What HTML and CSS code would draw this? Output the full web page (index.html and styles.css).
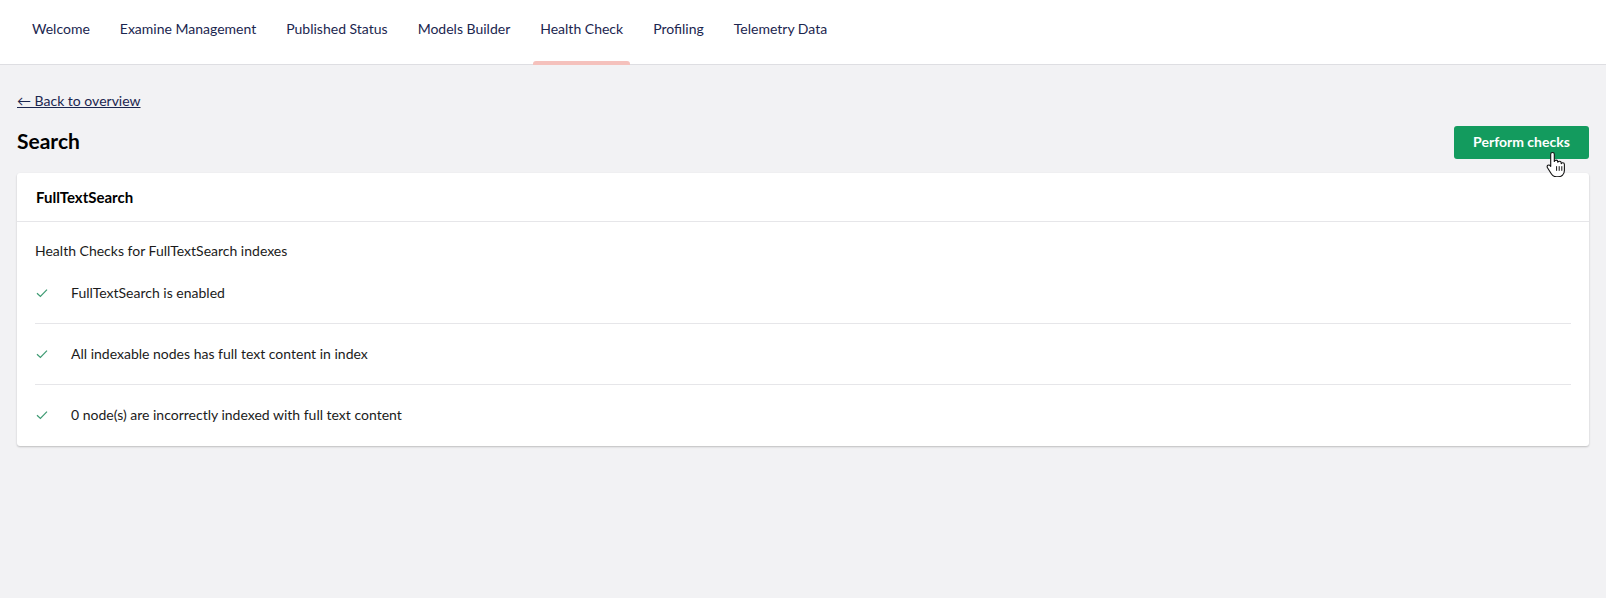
FILE: index.html
```html
<!DOCTYPE html>
<html lang="en">
<head>
<meta charset="utf-8">
<title>Health Check</title>
<link rel="stylesheet" href="styles.css">
</head>
<body>
<header class="topbar">
  <nav class="tabs">
    <a class="tab">Welcome</a>
    <a class="tab">Examine Management</a>
    <a class="tab">Published Status</a>
    <a class="tab">Models Builder</a>
    <a class="tab tab-active">Health Check</a>
    <a class="tab">Profiling</a>
    <a class="tab">Telemetry Data</a>
  </nav>
</header>
<main class="content">
  <a class="back-link">&larr; Back to overview</a>
  <div class="title-row">
    <h1 class="title">Search</h1>
    <div class="btn-wrap">
      <button class="btn-primary">Perform checks</button>
      <svg class="cursor" width="20" height="26" viewBox="0 0 20 26">
        <path d="M6.5 1.5c1 0 1.8.8 1.8 1.8v7.2c.3-.9 1-1.4 1.8-1.4 1 0 1.7.8 1.7 1.8v.4c.3-.7 1-1.1 1.7-1.1 1 0 1.7.8 1.7 1.8v.6c.3-.5.9-.8 1.5-.8 1 0 1.7.8 1.7 1.8v5.8c0 3.8-2.8 6.4-6.4 6.4h-1.6c-2.2 0-3.6-.9-4.8-2.6L1.5 16.8c-.6-.9-.4-2 .4-2.5.8-.5 1.8-.3 2.4.5l.4.6V3.3c0-1 .8-1.8 1.8-1.8z" fill="#fff" stroke="#111" stroke-width="1.1" stroke-linejoin="round"/>
        <path d="M10.6 15.2v4.6M13.2 15.2v4.6M15.8 15.2v4.6" stroke="#111" stroke-width="1" fill="none"/>
      </svg>
    </div>
  </div>
  <section class="card">
    <div class="card-header">FullTextSearch</div>
    <div class="card-body">
      <p class="card-desc">Health Checks for FullTextSearch indexes</p>
      <ul class="checks">
        <li class="check">
          <svg class="check-icon" width="12" height="10" viewBox="0 0 12 10"><path d="M1 5.2l3.4 3.3L11 1.6" fill="none" stroke="#3d9a72" stroke-width="1.2"/></svg>
          <span>FullTextSearch is enabled</span>
        </li>
        <li class="check">
          <svg class="check-icon" width="12" height="10" viewBox="0 0 12 10"><path d="M1 5.2l3.4 3.3L11 1.6" fill="none" stroke="#3d9a72" stroke-width="1.2"/></svg>
          <span>All indexable nodes has full text content in index</span>
        </li>
        <li class="check">
          <svg class="check-icon" width="12" height="10" viewBox="0 0 12 10"><path d="M1 5.2l3.4 3.3L11 1.6" fill="none" stroke="#3d9a72" stroke-width="1.2"/></svg>
          <span>0 node(s) are incorrectly indexed with full text content</span>
        </li>
      </ul>
    </div>
  </section>
</main>
</body>
</html>
```

FILE: styles.css
```css
* { box-sizing: border-box; }

html, body {
  margin: 0;
  padding: 0;
}

body {
  background: #f2f2f4;
  font-family: Lato, "Open Sans", sans-serif;
  color: #1b264f;
  height: 598px;
}

.topbar {
  background: #fff;
  height: 65px;
  border-bottom: 1px solid #dedee2;
  padding-left: 17px;
}

.tabs {
  display: flex;
  height: 64px;
}

.tab {
  position: relative;
  display: flex;
  align-items: center;
  padding: 0 15px 7px;
  font-size: 14px;
  color: #1b264f;
  height: 64px;
  cursor: pointer;
}

.tab-active::after {
  content: "";
  position: absolute;
  left: 8px;
  right: 8px;
  bottom: -1px;
  height: 4px;
  background: #f5c1bc;
  border-radius: 3px 3px 0 0;
}

.content {
  padding: 26px 17px 0;
}

.back-link {
  display: block;
  font-size: 14px;
  line-height: 20px;
  color: #1b264f;
  text-decoration: underline;
  width: max-content;
}

.title-row {
  display: flex;
  justify-content: space-between;
  align-items: center;
  margin-top: 15px;
  height: 33px;
}

.title {
  margin: -3px 0 0;
  font-size: 21px;
  font-weight: 700;
  color: #000;
  line-height: 28px;
}

.btn-wrap {
  position: relative;
}

.btn-primary {
  display: block;
  width: 135px;
  height: 33px;
  border: 0;
  border-radius: 3px;
  background: #139b5e;
  color: #fff;
  font-family: Lato, "Open Sans", sans-serif;
  font-weight: 700;
  font-size: 14px;
  padding: 0 0 2px;
}

.cursor {
  position: absolute;
  left: 92px;
  top: 25px;
}

.card {
  margin-top: 14px;
  background: #fff;
  border-radius: 3px;
  box-shadow: 0 1px 2px rgba(0, 0, 0, 0.22);
}

.card-header {
  height: 49px;
  border-bottom: 1px solid #e6e6e9;
  padding: 0 19px;
  display: flex;
  align-items: center;
  font-size: 15px;
  font-weight: 700;
  color: #000;
}

.card-body {
  padding: 19px 18px 1px;
}

.card-desc {
  margin: 0 0 2px;
  font-size: 14px;
  line-height: 20px;
  color: #1b1b1b;
}

.checks {
  list-style: none;
  margin: 0;
  padding: 0;
}

.check {
  display: flex;
  align-items: center;
  padding: 20px 0;
  font-size: 14px;
  line-height: 20px;
  color: #1b1b1b;
  border-bottom: 1px solid #e6e6e9;
}

.check:last-child {
  border-bottom: 0;
}

.check-icon {
  margin-left: 1px;
  margin-right: 23px;
  flex: none;
}
```
